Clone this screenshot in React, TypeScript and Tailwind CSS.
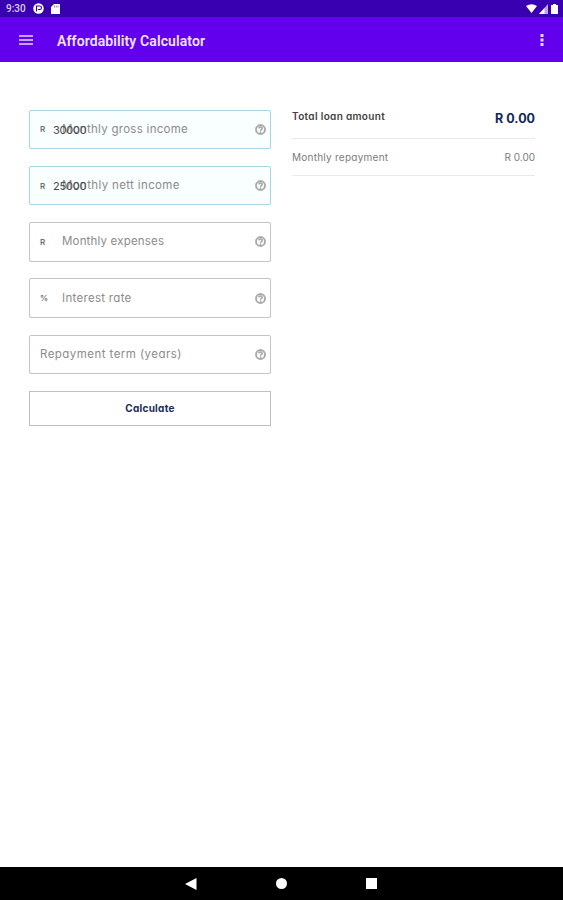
import React from 'react';

type FieldProps = {
  label: string;
  tracking: string;
  unit?: string;
  value?: string;
};

function HelpIcon() {
  return (
    <svg className="size-[11px] shrink-0" viewBox="0 0 22 22" fill="none">
      <circle cx="11" cy="11" r="9" stroke="#aaaaaa" strokeWidth="3.800" />
      <path d="M7.600 8.800C7.800 5.300 14.400 5.300 14.400 9c0 2.300-3.400 2.300-3.400 4.400" stroke="#a3a3a3" strokeWidth="3" />
      <circle cx="11" cy="16" r="1.700" fill="#a3a3a3" />
    </svg>
  );
}

function Field({ label, tracking, unit, value }: FieldProps) {
  const frame = value ? 'border-[#a5d9df] bg-[#f9fefe]' : 'border-[#c4c4c4] bg-white';
  return (
    <label className={`relative flex h-[39.500px] items-center rounded-[2px] border pr-[4px] pl-[10px] ${frame}`}>
      {unit && <span className="w-[22px] shrink-0 text-[8px] font-semibold text-[#707070]">{unit}</span>}
      {value && <span className="absolute top-[12px] left-[23px] text-[11px] leading-[15px] tracking-[-0.2px] text-[#4a4a4a]">{value}</span>}
      <span className={`grow text-[11.500px] leading-[15px] whitespace-nowrap text-[#8c8c8c] ${tracking}`}>{label}</span>
      <HelpIcon />
    </label>
  );
}

function StatusBar() {
  return (
    <div className="flex h-[17px] items-center bg-[#3900b1] pr-[5px] pl-[6px] text-white">
      <span className="w-[20px] font-[Roboto] text-[10px] leading-none font-medium text-[#d9cdf5]">9:30</span>
      <svg className="ml-[7px] size-[11px]" viewBox="0 0 22 22">
        <circle cx="11" cy="11" r="10.500" fill="#fff" />
        <path d="M7 17V6h6.500a3.500 3.500 0 0 1 0 7H10" fill="none" stroke="#3900b1" strokeWidth="2.300" />
      </svg>
      <svg className="ml-[7px] h-[10px] w-[9px]" viewBox="0 0 18 20">
        <path d="M6 0h11a1 1 0 0 1 1 1v18a1 1 0 0 1-1 1H1a1 1 0 0 1-1-1V6z" fill="#fff" />
        <path d="M7 3v4M10.500 3v4M14 3v4" stroke="#3900b1" strokeWidth="1" />
      </svg>
      <div className="ml-auto flex items-center gap-[2px]">
        <svg className="h-[9px] w-[11px]" viewBox="0 0 22 18">
          <path d="M0 4Q11-3 22 4L11 18z" fill="#fff" />
        </svg>
        <svg className="h-[10px] w-[9px]" viewBox="0 0 18 20">
          <path d="M18 0v20H0z" fill="#fff" fillOpacity=".65" />
          <path d="M11 8v12H0z" fill="#fff" />
        </svg>
        <svg className="ml-px h-[10px] w-[7px]" viewBox="0 0 14 20">
          <path d="M4 0h6v2h4v18H0V2h4z" fill="#fff" />
        </svg>
      </div>
    </div>
  );
}

export default function App() {
  return (
    <div className="flex h-[900px] w-[563px] flex-col overflow-hidden bg-white font-[Inter,sans-serif] [font-feature-settings:'cv11']">
      <StatusBar />
      <header className="flex h-[45px] items-center bg-[#6200ee] pr-[19px] pl-[19px] text-white">
        <svg className="mt-px h-[10px] w-[14px]" viewBox="0 0 14 10">
          <path d="M0 1h14M0 5h14M0 9h14" stroke="#e6d8fd" strokeWidth="1.700" />
        </svg>
        <h1 className="ml-[24px] pt-[2px] font-[Roboto] text-[14px] leading-5 font-semibold tracking-[0.110px] text-[#eee3ff]">Affordability Calculator</h1>
        <svg className="ml-auto h-[12px] w-[4px]" viewBox="0 0 4 12">
          <path d="M.5 0h3v3h-3zM.5 4.500h3v3h-3zM.5 9h3v3h-3z" fill="#e6d8fd" />
        </svg>
      </header>

      <main className="flex grow items-start gap-[21px] pt-[47.700px] pr-[28px] pl-[29px]">
        <form className="flex w-[242px] shrink-0 flex-col gap-[16.750px]">
          <Field label="Monthly gross income" unit="R" value="30000" tracking="tracking-[0.28px]" />
          <Field label="Monthly nett income" unit="R" value="25000" tracking="tracking-[0.36px]" />
          <Field label="Monthly expenses" unit="R" tracking="tracking-[0.18px]" />
          <Field label="Interest rate" unit="%" tracking="tracking-[0.3px]" />
          <Field label="Repayment term (years)" tracking="tracking-[0.45px]" />
          <button type="button" className="h-[35px] border border-[#c0c0c0] bg-white text-[10px] font-bold tracking-[0.250px] text-[#172c5b]">Calculate</button>
        </form>

        <section className="grow">
          <div className="flex h-[29.300px] justify-between border-b border-[#e9e9e9]">
            <span className="text-[10px] leading-[13px] font-semibold tracking-[0.330px] text-[#424242]">Total loan amount</span>
            <span className="text-[12.500px] leading-[17.500px] font-bold text-[#12285c]">R 0.00</span>
          </div>
          <div className="flex h-[37px] items-center justify-between border-b border-[#e9e9e9] pt-px text-[10px] text-[#7c7c7c]">
            <span className="tracking-[0.250px]">Monthly repayment</span>
            <span>R 0.00</span>
          </div>
        </section>
      </main>

      <nav className="flex h-[33px] shrink-0 items-center bg-black">
        <svg className="ml-[185px] size-[12px]" viewBox="0 0 12 12">
          <path d="M0 6 11.500 0v12z" fill="#fff" />
        </svg>
        <span className="ml-[79px] size-[11px] rounded-full bg-white" />
        <span className="ml-[79px] size-[11px] bg-white" />
      </nav>
    </div>
  );
}
